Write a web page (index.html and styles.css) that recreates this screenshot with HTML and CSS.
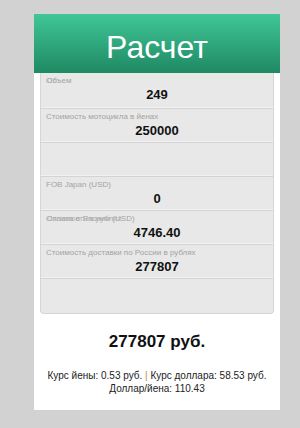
FILE: index.html
```html
<!DOCTYPE html>
<html lang="ru">
  <head>
    <meta charset="UTF-8" />
    <meta name="viewport" content="width=device-width, initial-scale=1.0" />
    <title>Расчет</title>
    <link rel="stylesheet" href="styles.css">
  </head>
  <body>
    <div class="calc-card">
      <h1 class="calc-title">Расчет</h1>

      <div class="field-list">
        <div class="field-row field-row-first">
          <div class="field-label">
            <span>Объем</span>
            <span class="label-ghost">Сс</span>
          </div>
          <div class="field-value">249</div>
        </div>
        <div class="field-row">
          <div class="field-label"><span>Стоимость мотоцикла в йенах</span></div>
          <div class="field-value">250000</div>
        </div>
        <div class="field-row"></div>
        <div class="field-row">
          <div class="field-label"><span>FOB Japan (USD)</span></div>
          <div class="field-value">0</div>
        </div>
        <div class="field-row">
          <div class="field-label">
            <span>Оплата в Японии (USD)</span>
            <span class="label-ghost">Стоимость в рублях</span>
          </div>
          <div class="field-value">4746.40</div>
        </div>
        <div class="field-row">
          <div class="field-label"><span>Стоимость доставки по России в рублях</span></div>
          <div class="field-value">277807</div>
        </div>
        <div class="field-row"></div>
      </div>

      <div class="total">277807 руб.</div>

      <p class="rates">
        Курс йены: 0.53 руб. <span class="sep">|</span> Курс доллара: 58.53 руб.
        Доллар/йена: 110.43
      </p>
    </div>
  </body>
</html>
```

FILE: styles.css
```css
body {
  margin: 0;
  background-color: #d2d2d2;
  font-family: "Liberation Sans", Arial, sans-serif;
  color: #222;
}

.calc-card {
  width: 246px;
  margin: 14px 0 0 34px;
  padding-bottom: 15px;
  background-color: #fff;
}

.calc-title {
  margin: 0;
  height: 59px;
  box-sizing: border-box;
  padding-top: 17px;
  font-size: 32px;
  font-weight: normal;
  line-height: 32px;
  text-align: center;
  color: #fff;
  background: linear-gradient(to bottom, #40c697, #1f8963);
}

.field-list {
  margin: 0 6px;
  background-color: #e8e8e8;
  border: 1px solid #d6d6d6;
  border-top: none;
  border-radius: 0 0 4px 4px;
}

.field-row {
  padding: 2px 0 0 5px;
  box-sizing: border-box;
  height: 34px;
  border-bottom: 1px solid #d4d4d4;
  box-shadow: inset 0 -1px 0 #f2f2f2;
}

.field-row-first {
  height: 36px;
}

.field-row:last-child {
  border-bottom: none;
  box-shadow: none;
}

.field-label {
  position: relative;
  height: 11px;
  font-size: 8px;
  line-height: 11px;
  color: #a3a3a3;
  white-space: nowrap;
}

.label-ghost {
  position: absolute;
  left: 1px;
  top: 0;
  color: #b0b0b0;
}

.field-value {
  margin-top: 1px;
  padding-right: 5px;
  font-size: 13px;
  font-weight: bold;
  line-height: 15px;
  text-align: center;
  color: #111;
}

.total {
  margin-top: 18px;
  font-size: 17px;
  font-weight: bold;
  line-height: 20px;
  text-align: center;
  color: #111;
}

.rates {
  margin: 17px 0 0;
  padding: 0 4px;
  font-size: 10px;
  line-height: 13px;
  text-align: center;
}

.sep {
  color: #c98a3a;
}
```
